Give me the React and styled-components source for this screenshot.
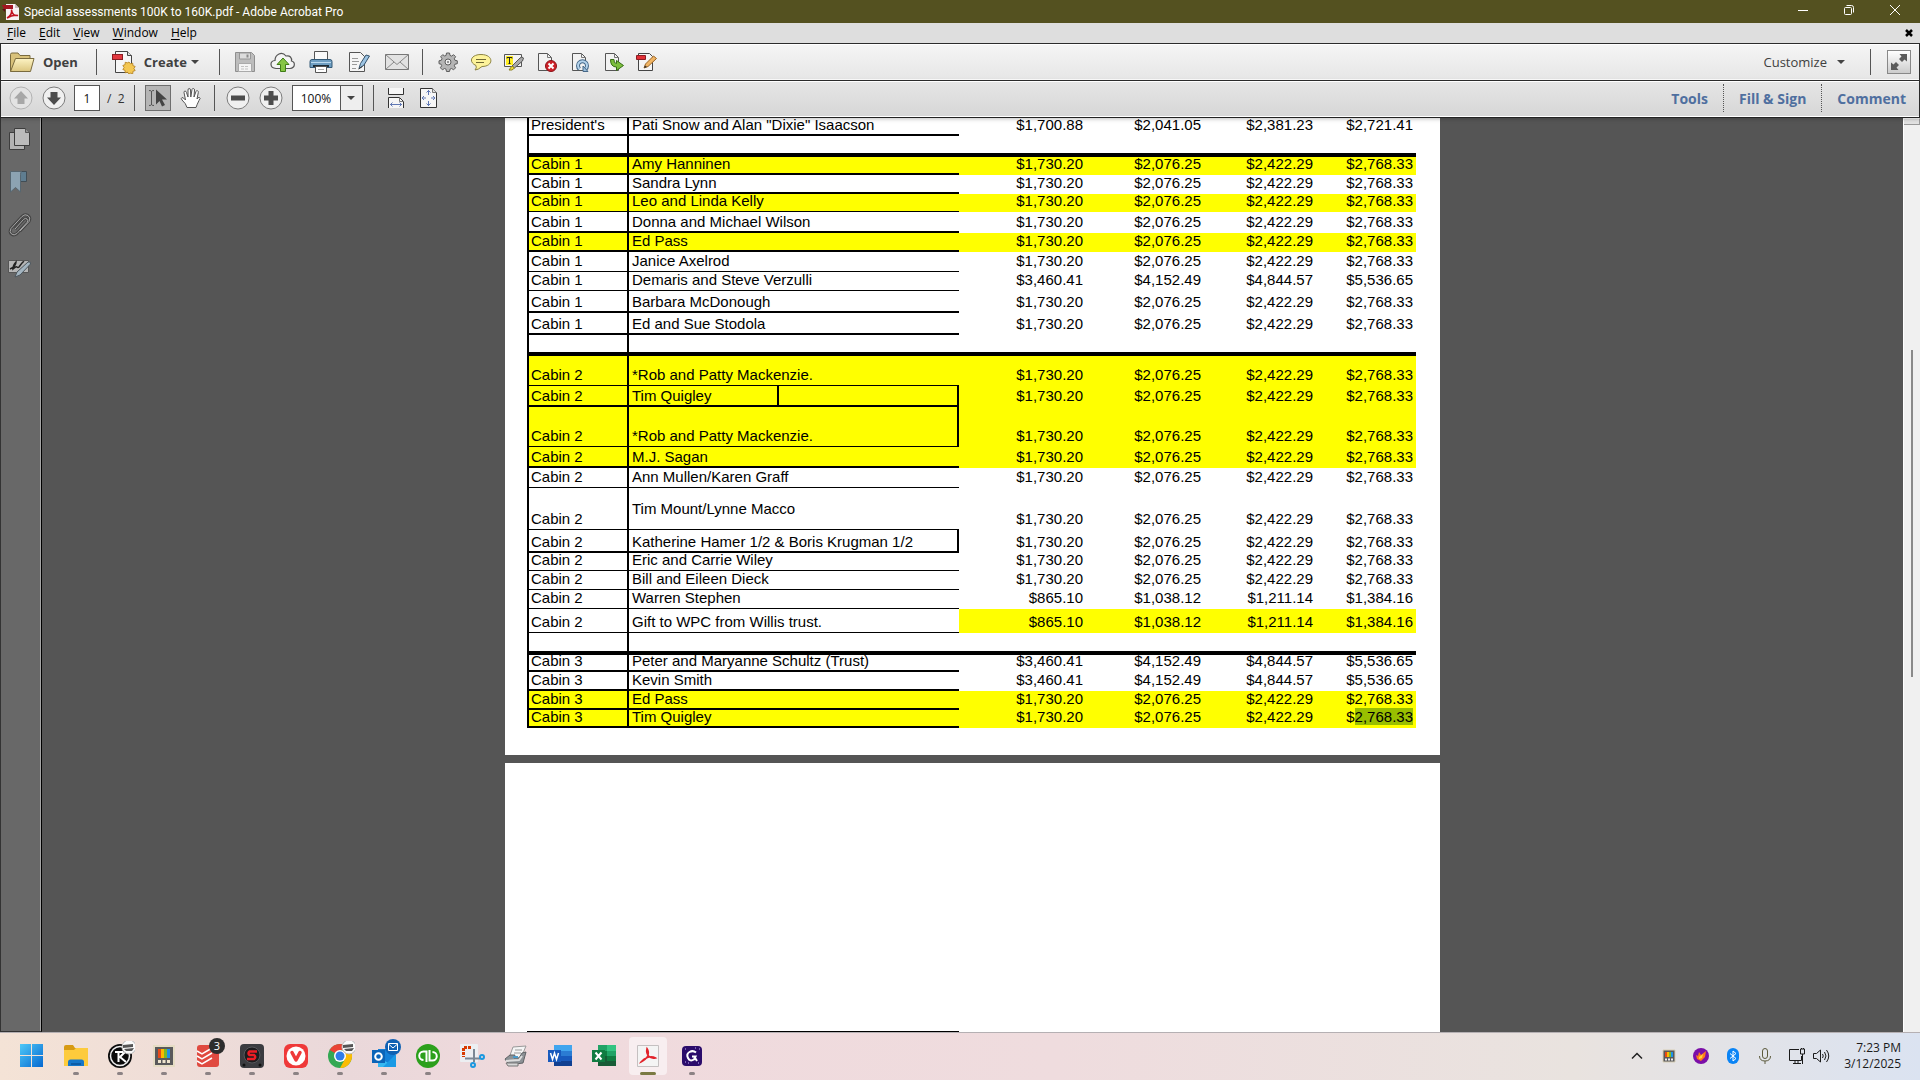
import { useState } from 'react';
import styled, { createGlobalStyle, css } from 'styled-components';

const A = ['$1,730.20', '$2,076.25', '$2,422.29', '$2,768.33'];
const B = ['$3,460.41', '$4,152.49', '$4,844.57', '$5,536.65'];
const C = ['$865.10', '$1,038.12', '$1,211.14', '$1,384.16'];
const D = ['$1,700.88', '$2,041.05', '$2,381.23', '$2,721.41'];

// h: row height, line: thickness of the rule under the row
const rows = [
  { cabin: "President's", name: 'Pati Snow and Alan "Dixie" Isaacson', amounts: D, h: 18, line: 2 },
  { h: 21, line: 4 },
  { cabin: 'Cabin 1', name: 'Amy Hanninen', amounts: A, h: 18, line: 2, paid: true },
  { cabin: 'Cabin 1', name: 'Sandra Lynn', amounts: A, h: 19, line: 2 },
  { cabin: 'Cabin 1', name: 'Leo and Linda Kelly', amounts: A, h: 18, line: 1, paid: true },
  { cabin: 'Cabin 1', name: 'Donna and Michael Wilson', amounts: A, h: 21, line: 2 },
  { cabin: 'Cabin 1', name: 'Ed Pass', amounts: A, h: 19, line: 2, paid: true },
  { cabin: 'Cabin 1', name: 'Janice Axelrod', amounts: A, h: 20, line: 1 },
  { cabin: 'Cabin 1', name: 'Demaris and Steve Verzulli', amounts: B, h: 19, line: 1 },
  { cabin: 'Cabin 1', name: 'Barbara McDonough', amounts: A, h: 22, line: 2 },
  { cabin: 'Cabin 1', name: 'Ed and Sue Stodola', amounts: A, h: 22, line: 2 },
  { h: 21, line: 4 },
  { cabin: 'Cabin 2', name: '*Rob and Patty Mackenzie.', amounts: A, h: 30, line: 1, paid: true },
  { cabin: 'Cabin 2', name: 'Tim Quigley', amounts: A, h: 21, line: 2, paid: true, boxed: true, split: true },
  { cabin: 'Cabin 2', name: '*Rob and Patty Mackenzie.', amounts: A, h: 40, line: 1, paid: true, boxed: true },
  { cabin: 'Cabin 2', name: 'M.J. Sagan', amounts: A, h: 21, line: 2, paid: true },
  { cabin: 'Cabin 2', name: 'Ann Mullen/Karen Graff', amounts: A, h: 20, line: 1 },
  { cabin: 'Cabin 2', name: 'Tim Mount/Lynne Macco', amounts: A, h: 42, line: 1, raised: true },
  { cabin: 'Cabin 2', name: 'Katherine Hamer 1/2 & Boris Krugman 1/2', amounts: A, h: 23, line: 2, boxed: true },
  { cabin: 'Cabin 2', name: 'Eric and Carrie Wiley', amounts: A, h: 18, line: 1 },
  { cabin: 'Cabin 2', name: 'Bill and Eileen Dieck', amounts: A, h: 19, line: 1 },
  { cabin: 'Cabin 2', name: 'Warren Stephen', amounts: C, h: 19, line: 1 },
  { cabin: 'Cabin 2', name: 'Gift to WPC from Willis trust.', amounts: C, h: 24, line: 1, paidAmounts: true },
  { h: 22, line: 4 },
  { cabin: 'Cabin 3', name: 'Peter and Maryanne Schultz (Trust)', amounts: B, h: 17, line: 2 },
  { cabin: 'Cabin 3', name: 'Kevin Smith', amounts: B, h: 19, line: 2 },
  { cabin: 'Cabin 3', name: 'Ed Pass', amounts: A, h: 19, line: 2, paid: true },
  { cabin: 'Cabin 3', name: 'Tim Quigley', amounts: A, h: 18, line: 2, paid: true, selected: true },
];

const columns = [100, 150, 182, 127, 118, 112, 100];

const icons = {
  acrobat: (
    <svg width="18" height="18" viewBox="0 0 18 18">
      <path d="M4 1h9l4 4v12H4z" fill="#f7f3f3" />
      <path d="M13 1l4 4h-4z" fill="#c9bcbc" />
      <path d="M0 2h11v4H2z" fill="#a31621" />
      <path d="M0 6l3 3V6z" fill="#5d0b12" />
      <path d="M5 15c4-2 5-5 4.500-8.500 .5 5 3 6.500 6.500 6-4-1-7 0-11 2.500z" fill="none" stroke="#c1121f" strokeWidth="1.500" />
    </svg>
  ),
  folder: (
    <svg width="26" height="22" viewBox="0 0 26 22">
      <path d="M1.500 20.500V3.500q0-1.500 1.500-1.500h6l2 2.500h10v4" fill="#d9c27b" stroke="#7a6b3e" />
      <path d="M1.500 20.500L6.500 7.500h18.500l-3.500 13z" fill="url(#fold)" stroke="#7a6b3e" strokeLinejoin="round" />
      <defs><linearGradient id="fold" x1="0" y1="0" x2="0" y2="1"><stop offset="0" stopColor="#fdf3c4" /><stop offset="1" stopColor="#dcc67f" /></linearGradient></defs>
    </svg>
  ),
  create: (
    <svg width="24" height="24" viewBox="0 0 24 24">
      <path d="M3.500 1.500h12l4 4v17h-16z" fill="#f6f6f6" stroke="#444" />
      <path d="M15.500 1.500v4h4" fill="#ddd" stroke="#444" />
      <rect x=".5" y="4.500" width="10" height="5" fill="#e2383f" stroke="#8b1c22" />
      <path d="M17 12l1.500 1.800 2.300-.6.100 2.400 2.300.9-1.300 2 1.300 2-2.300.9-.1 2.300-2.300-.5L17 24l-1.500-1.800-2.300.6-.1-2.400-2.300-.9 1.300-2-1.300-2 2.300-.9.100-2.300 2.300.5z" fill="#f4c752" stroke="#b07c1c" strokeWidth=".8" />
    </svg>
  ),
  save: (
    <svg width="22" height="22" viewBox="0 0 22 22">
      <path d="M1.500 1.500h16l3 3v16h-19z" fill="#bdbdbd" stroke="#8f8f8f" />
      <path d="M5.500 2h11v6h-11z" fill="#ddd" stroke="#979797" /><path d="M12.500 3.500h2v3h-2z" fill="#8b8b8b" />
      <path d="M4.500 12.500h13v8h-13z" fill="#f4f4f4" stroke="#aaa" />
      <path d="M7 15.500h8M7 18h8" stroke="#c2c2c2" strokeDasharray="3 1" />
    </svg>
  ),
  cloud: (
    <svg width="26" height="22" viewBox="0 0 26 22">
      <path d="M6 17.500C-.5 17-.5 10 5 9.500 5 3 12 0 16 5c4-1 6 2 5.500 5 4 1 4 7-1.500 7.500z" fill="#f4f4f4" stroke="#555" strokeWidth="1.200" />
      <path d="M13 7l6 6.500h-3.500v7h-5v-7H7z" fill="#86c544" stroke="#3f7d16" />
    </svg>
  ),
  print: (
    <svg width="24" height="24" viewBox="0 0 24 24">
      <path d="M5.500 1.500h13v10h-13z" fill="#fafafa" stroke="#555" />
      <path d="M3 9.500h18q2 0 2 2v6h-22v-6q0-2 2-2z" fill="#6e9ec2" stroke="#345a77" />
      <path d="M2 12.500h20" stroke="#bcd9ee" /><path d="M4 15h16v2H4z" fill="#1c2c38" />
      <path d="M6.500 16.500h11v6h-11z" fill="#fff" stroke="#555" /><path d="M9 19.500h6" stroke="#aaa" />
    </svg>
  ),
  sign: (
    <svg width="22" height="22" viewBox="0 0 22 22">
      <path d="M1.500 1.500h11l4 4v15h-15z" fill="#f5f5f5" stroke="#555" />
      <path d="M4 7.500h6M4 10.500h7M4 13.500h5M4 17.500h4" stroke="#999" />
      <path d="M11 17.500l1.500-5L18 4l3.500 1L16 14z" fill="#9cc3e2" stroke="#36536c" /><path d="M10.500 18l4-2.500" stroke="#333" />
    </svg>
  ),
  mail: (
    <svg width="26" height="18" viewBox="0 0 26 18">
      <path d="M1.500 1.500h23v15h-23z" fill="#e2e2e2" stroke="#777" />
      <path d="M1.500 1.500L13 11.500l11.500-10M1.500 16.500L10 9M24.500 16.500L16 9" fill="none" stroke="#888" />
    </svg>
  ),
  gear: (
    <svg width="20" height="20" viewBox="0 0 20 20">
      <path d="M8.500 1h3l.5 2.400 1.600.7 2-1.400 2 2-1.300 2.100.7 1.500 2.300.5v2.900l-2.400.5-.6 1.600 1.300 2-2 2-2-1.300-1.600.7-.5 2.300h-3l-.5-2.400-1.500-.6-2.100 1.300-2-2 1.300-2.100-.6-1.500L1 11.700V8.800l2.300-.5.700-1.600-1.300-2 2-2 2 1.300 1.400-.6z" fill="#b5b5b5" stroke="#5d5d5d" />
      <circle cx="10" cy="10" r="3" fill="#eee" stroke="#5d5d5d" /><circle cx="10" cy="10" r="1" fill="#777" />
    </svg>
  ),
  comment: (
    <svg width="22" height="18" viewBox="0 0 22 18">
      <path d="M11 1.500c13 0 13 12 1 12q-4 3.500-7 3.500 2-2 1-4.500C-2 9 1 1.500 11 1.500z" fill="#fdf39a" stroke="#8d8443" />
      <path d="M6 6.500h10M6 9.500h8" stroke="#6f6835" />
    </svg>
  ),
  highlight: (
    <svg width="22" height="20" viewBox="0 0 22 20">
      <path d="M1.500 2.500h17v12h-17z" fill="#f4f4f4" stroke="#555" /><path d="M3 4h7v9H3z" fill="#ffee22" />
      <path d="M4 6.500v-1h5v1M6.500 6v5M5.500 11.500h2" fill="none" stroke="#222" />
      <path d="M9 14l8-8q2-2 3.500 0l-1 3-8 7z" fill="#aaa" stroke="#555" /><path d="M6 18l3-4 2.500 2-2.500 2z" fill="#efdc2c" stroke="#8b8024" />
    </svg>
  ),
  remove: (
    <svg width="22" height="22" viewBox="0 0 22 22">
      <path d="M2.500 2.500h9l4 4v13h-13z" fill="#f2f2f2" stroke="#555" /><path d="M11.500 2.500v4h4" fill="none" stroke="#777" />
      <circle cx="15" cy="15" r="5.500" fill="#cf2028" stroke="#8a1217" /><path d="M12.500 12.500l5 5m0-5l-5 5" stroke="#fff" strokeWidth="2" />
    </svg>
  ),
  rotate: (
    <svg width="22" height="22" viewBox="0 0 22 22">
      <path d="M3.500 2.500h9l4 4v13h-13z" fill="#f2f2f2" stroke="#555" /><path d="M12.500 2.500v4h4" fill="none" stroke="#777" />
      <path d="M10.500 18a4.500 4.500 0 1 1 6 0" fill="none" stroke="#466888" strokeWidth="4" />
      <path d="M10.500 18a4.500 4.500 0 1 1 6 0" fill="none" stroke="#b4d3ec" strokeWidth="2" /><path d="M14 15v5.500h5z" fill="#9dc1de" stroke="#466888" />
    </svg>
  ),
  extract: (
    <svg width="22" height="22" viewBox="0 0 22 22">
      <path d="M3.500 2.500h9l4 4v13h-13z" fill="#f2f2f2" stroke="#555" /><path d="M12.500 2.500v4h4" fill="none" stroke="#777" />
      <path d="M8.500 8.500q0 7.500 6 7.500v3.500l7-5-7-5v3q-3 0-2.500-4z" fill="#7cbf3e" stroke="#356d14" />
    </svg>
  ),
  edit: (
    <svg width="22" height="22" viewBox="0 0 22 22">
      <path d="M3.500 2.500h11l3 3v14h-14z" fill="#f5f5f5" stroke="#444" /><path d="M1.500 4.500h9v4h-9z" fill="#e22f36" stroke="#8b1c22" />
      <path d="M9 17l1.500-4 8-8 3 2.500-8.500 8z" fill="#f1b565" stroke="#9a6424" /><path d="M9 17l1-2.500 2 1.500z" fill="#333" />
    </svg>
  ),
  up: (
    <svg width="24" height="24" viewBox="0 0 24 24">
      <circle cx="12" cy="12" r="11" fill="#e3e3e3" stroke="#b2b2b2" /><path d="M12 5l7 7.500h-3.500V18h-7v-5.500H5z" fill="#a7a7a7" />
    </svg>
  ),
  down: (
    <svg width="24" height="24" viewBox="0 0 24 24">
      <circle cx="12" cy="12" r="11" fill="#f0f0f0" stroke="#7c7c7c" /><path d="M12 19l7-7.500h-3.500V6h-7v5.500H5z" fill="#4d4d4d" />
    </svg>
  ),
  minus: (
    <svg width="24" height="24" viewBox="0 0 24 24">
      <circle cx="12" cy="12" r="11" fill="#f0f0f0" stroke="#7c7c7c" /><path d="M5 9.500h14v5H5z" fill="#4d4d4d" />
    </svg>
  ),
  plus: (
    <svg width="24" height="24" viewBox="0 0 24 24">
      <circle cx="12" cy="12" r="11" fill="#f0f0f0" stroke="#7c7c7c" /><path d="M9.500 5h5v4.500H19v5h-4.500V19h-5v-4.500H5v-5h4.500z" fill="#4d4d4d" />
    </svg>
  ),
  select: (
    <svg width="22" height="20" viewBox="0 0 22 20">
      <path d="M2 2.500q2.500 0 2.500 1 0-1 2.500-1M4.500 3v14M2 17.500q2.500 0 2.500-1 0 1 2.500 1" fill="none" stroke="#555" />
      <path d="M9 1.500v15l3.500-3.500 2.500 5.500 3-1.500-3-5.500h5z" fill="#444" />
    </svg>
  ),
  hand: (
    <svg width="22" height="22" viewBox="0 0 22 22">
      <path d="M7 20.500q-1-4-5-7.500-1.500-2 0-2.500 1.500 0 3.500 2.500L4 5.500q0-1.500 1-1.500t1.500 1.500L8 10V3q0-1.500 1.200-1.500T10.500 3l.3 7L12 2.500q.5-1.300 1.500-1t1 1.500L14 10l2-5.500q.5-1.300 1.500-.8t.8 1.800L17 12q1-2 2.500-1.500t-.5 3q-2 4-3 7z" fill="#fdfdfd" stroke="#555" strokeLinejoin="round" />
    </svg>
  ),
  fitWidth: (
    <svg width="20" height="22" viewBox="0 0 20 22">
      <path d="M2.500 1v6.500h15V1" fill="#f6f6f6" stroke="#333" /><path d="M2.500 21V10.500h11l4 4V21" fill="#f6f6f6" stroke="#333" />
      <path d="M13.500 10.500v4h4" fill="none" stroke="#777" /><path d="M4 17.500h12M6.500 15.500l-2 2 2 2M13.500 15.500l2 2-2 2" fill="none" stroke="#6078b4" />
    </svg>
  ),
  fitPage: (
    <svg width="20" height="22" viewBox="0 0 20 22">
      <path d="M1.500 1.500h12l4 4v15h-16z" fill="#f6f6f6" stroke="#333" /><path d="M13.500 1.500v4h4" fill="#ddd" stroke="#777" />
      <path d="M9.500 3v5M9.500 14v5M3 11h4M12 11h4M7.500 5.500l2-2 2 2M7.500 16.500l2 2 2-2M5 9l-2 2 2 2M14 9l2 2-2 2" fill="none" stroke="#6078b4" />
    </svg>
  ),
  expand: (
    <svg width="22" height="22" viewBox="0 0 22 22">
      <path d="M11.500 3H19v7.500l-2.500-2L14 11l-3-3 2.500-2.500zM3 11.500l2.500 2L8 11l3 3-2.500 2.500 2 2.500H3z" fill="#5b5b5b" />
    </svg>
  ),
  pages: (
    <svg width="24" height="24" viewBox="0 0 24 24">
      <path d="M1.500 5.500h15v17h-15z" fill="#b3b3b3" stroke="#3d3d3d" />
      <path d="M6.500 1.500h11l4 4v13h-15z" fill="#bbb" stroke="#3d3d3d" /><path d="M17.500 1.500v4h4" fill="#8e8e8e" stroke="#555" />
    </svg>
  ),
  bookmark: (
    <svg width="24" height="24" viewBox="0 0 24 24">
      <path d="M12 1.500h6.500v10H12z" fill="#5f7d90" stroke="#414d55" /><path d="M2.500 1.500h11q-1 1-1 3V22l-5-4.500-5 4.500z" fill="#8ca3b2" stroke="#566670" />
    </svg>
  ),
  clip: (
    <svg width="24" height="24" viewBox="0 0 24 24">
      <path d="M7 16l8.500-9.500q2-2 3.500-.5t0 3.500l-10 11q-3 2.500-5.500.5t-.5-5.500L14 3.500q3-3 6-1t1 6L12 18" fill="none" stroke="#444" strokeWidth="3" />
      <path d="M7 16l8.500-9.500q2-2 3.500-.5t0 3.500l-10 11q-3 2.500-5.500.5t-.5-5.500L14 3.500q3-3 6-1t1 6L12 18" fill="none" stroke="#a8a8a8" strokeWidth="1" />
    </svg>
  ),
  signatures: (
    <svg width="24" height="24" viewBox="0 0 24 24">
      <path d="M.5 4.500h20v12H.5z" fill="#b5b5b5" stroke="#555" />
      <path d="M2 13q6-3 6-7-3 3-3 7 3-3 4-2t2 0q4-6 5-5" fill="none" stroke="#222" strokeWidth="1.500" />
      <path d="M7 21l2-5 11-10q3-1 2.500 2L12 19z" fill="#a3b4c0" stroke="#4c565d" />
    </svg>
  ),
};

const taskIcons = {
  Start: (
    <svg width="24" height="24" viewBox="0 0 24 24">
      <defs><linearGradient id="win" x1="0" y1="0" x2="1" y2="1"><stop offset="0" stopColor="#4fc9f8" /><stop offset="1" stopColor="#0568d0" /></linearGradient></defs>
      <path d="M0 0h11v11H0zM12 0h11v11H12zM0 12h11v11H0zM12 12h11v11H12z" fill="url(#win)" />
    </svg>
  ),
  'File Explorer': (
    <svg width="24" height="24" viewBox="0 0 24 24">
      <path d="M0 3q0-2 2-2h7l2 3h11v8H0z" fill="#d79a13" /><path d="M0 6h10l2-2h12v18H0z" fill="#fdcb3c" />
      <path d="M4 22v-4q0-2.500 2.500-2.500h11q2.500 0 2.500 2.500v4z" fill="#1577c9" /><path d="M7 19h10v2H7z" fill="#0c5ca6" />
    </svg>
  ),
  Keyman: (
    <svg width="30" height="30" viewBox="0 0 30 30">
      <circle cx="15" cy="15" r="12" fill="#0c0c0c" /><circle cx="15" cy="15" r="9.500" fill="none" stroke="#eee" strokeWidth="1.500" />
      <path d="M10 11h8M13.500 11v10M20 11l-5 5 6 5" fill="none" stroke="#fff" strokeWidth="2" />
      <circle cx="24" cy="6" r="7" fill="#fafafa" stroke="#bbb" /><path d="M18 4l10-1v3l-10 1zM19 8l10-1-2 3h-6z" fill="#555" />
    </svg>
  ),
  PowerToys: (
    <svg width="24" height="24" viewBox="0 0 24 24">
      <path d="M2 2h20v20H2z" fill="#59595b" stroke="#e5dcc4" strokeWidth="2" />
      <path d="M6 5h3v9H6z" fill="#e64a19" /><path d="M9 5h3v9H9z" fill="#fbb900" /><path d="M12 5h3v9h-3z" fill="#7cb928" /><path d="M15 5h3v9h-3z" fill="#1e90e8" />
      <path d="M6 16h3v3H6zM10.500 16h3v3h-3zM15 16h3v3h-3z" fill="#eee4cd" />
    </svg>
  ),
  Todoist: (
    <svg width="24" height="24" viewBox="0 0 24 24">
      <rect x="1" y="1" width="22" height="22" rx="3" fill="#e04a40" />
      <path d="M1 7l5 3 10-6M1 12l5 3 10-6M1 17l5 3 10-6" fill="none" stroke="#fff" strokeWidth="1.500" />
    </svg>
  ),
  Scrivener: (
    <svg width="26" height="26" viewBox="0 0 26 26">
      <rect x="1" y="1" width="24" height="24" rx="4" fill="#3b3c40" /><circle cx="13" cy="12" r="8" fill="#1c1c1e" stroke="#57585c" />
      <path d="M18 8.500h-7.500q-2 1.500 0 3.500h4.500q2.500 2 0 4H8" fill="none" stroke="#ee1c24" strokeWidth="2.500" />
      <circle cx="5" cy="22" r="1.500" fill="#111" /><circle cx="21" cy="22" r="1.500" fill="#111" />
    </svg>
  ),
  Vivaldi: (
    <svg width="24" height="24" viewBox="0 0 24 24">
      <rect width="24" height="24" rx="6" fill="#ef3939" /><circle cx="12" cy="12" r="9.500" fill="#fff" />
      <path d="M8 8.500l4 7.500 4-7.500" fill="none" stroke="#ef3939" strokeWidth="3.500" strokeLinecap="round" strokeLinejoin="round" />
    </svg>
  ),
  Chrome: (
    <svg width="30" height="30" viewBox="0 0 30 30">
      <circle cx="15" cy="15" r="12" fill="#34a853" /><path d="M15 15L4.600 9A12 12 0 0 1 25.400 9H15z" fill="#ea4335" />
      <path d="M25.400 9A12 12 0 0 1 15 27l5-9-2-9z" fill="#fbbc04" /><circle cx="15" cy="15" r="6" fill="#fff" /><circle cx="15" cy="15" r="4.500" fill="#2f7de9" />
      <circle cx="24" cy="6" r="7" fill="#fafafa" stroke="#bbb" /><path d="M18 4l10-1v3l-10 1zM19 8l10-1-2 3h-6z" fill="#555" />
    </svg>
  ),
  Outlook: (
    <svg width="34" height="34" viewBox="0 0 34 34">
      <path d="M11 10h17v18H11z" fill="#1380d8" /><path d="M11 18l17 10H11z" fill="#35b8f1" /><path d="M29 15v13H16z" fill="#1a9ae5" />
      <rect x="5" y="11" width="13" height="13" fill="#0a64b8" /><circle cx="11.500" cy="17.500" r="3.300" fill="none" stroke="#fff" strokeWidth="2" />
      <circle cx="26" cy="8" r="8" fill="#0f61b3" /><path d="M21.500 4.500h9v7h-9zM21.500 5l4.500 4 4.500-4" fill="none" stroke="#fff" />
    </svg>
  ),
  QuickBooks: (
    <svg width="26" height="26" viewBox="0 0 26 26">
      <circle cx="13" cy="13" r="12" fill="#2ca01c" />
      <path d="M11.500 19V8.500H8.500a4 4 0 0 0 0 8.500M14.500 7v10.500h3a4 4 0 0 0 0-8.500" fill="none" stroke="#fff" strokeWidth="2" />
    </svg>
  ),
  'Snipping Tool': (
    <svg width="26" height="26" viewBox="0 0 26 26">
      <rect x="1" y="1" width="18" height="18" rx="1" fill="#eceff2" /><path d="M12 4.500H4.500V14" fill="none" stroke="#d83b01" strokeWidth="3" strokeDasharray="3 1" />
      <path d="M15 6v13M6 15.500h15" stroke="#7b8794" strokeWidth="2" /><circle cx="14" cy="22" r="2" fill="none" stroke="#1a98e0" strokeWidth="2" /><circle cx="23" cy="14" r="2" fill="none" stroke="#1a98e0" strokeWidth="2" />
    </svg>
  ),
  Scanner: (
    <svg width="26" height="24" viewBox="0 0 26 24">
      <path d="M10 3l13-1-5 12H6z" fill="#f5f5f5" stroke="#999" /><path d="M12 6h7M11 9h7" stroke="#999" />
      <path d="M2 15l5-4h5l-1 3h5l3-5 4-1-3 11-14 2z" fill="#8d9296" stroke="#5e6265" /><path d="M3 17l13-1 3-4" fill="none" stroke="#ddd" strokeWidth="2" /><path d="M3 19h12v3H5z" fill="#d8d8d8" stroke="#777" />
      <path d="M10 13h5" stroke="#4b9ac9" strokeWidth="2" />
    </svg>
  ),
  Word: (
    <svg width="24" height="24" viewBox="0 0 24 24">
      <path d="M6 1h18v6H6z" fill="#41a5ee" /><path d="M6 7h18v5H6z" fill="#2b7cd3" /><path d="M6 12h18v5H6z" fill="#185abd" /><path d="M6 17h18v5H6z" fill="#103f91" />
      <path d="M0 6h13v12H0z" fill="#185abd" /><path d="M2.500 9l2 6.500 2-6.500 2 6.500 2-6.500" fill="none" stroke="#fff" strokeWidth="1.500" />
    </svg>
  ),
  Excel: (
    <svg width="24" height="24" viewBox="0 0 24 24">
      <path d="M6 1h9v6H6z" fill="#21a366" /><path d="M15 1h9v6h-9z" fill="#33c481" /><path d="M6 7h9v5H6z" fill="#107c41" /><path d="M15 7h9v5h-9z" fill="#21a366" /><path d="M6 12h18v10H6z" fill="#185c37" /><path d="M15 12h9v5h-9z" fill="#107c41" />
      <path d="M0 6h13v12H0z" fill="#107c41" /><path d="M3.500 8.500l6 7m0-7l-6 7" stroke="#fff" strokeWidth="2" />
    </svg>
  ),
  Acrobat: (
    <svg width="24" height="24" viewBox="0 0 24 24">
      <path d="M1.500 1.500h21v21h-21z" fill="#f4f4f4" stroke="#c5c0c1" />
      <path d="M5 18c7-3 9-9 6-13.500-1.500 6 3 11 8.500 9.500-4-2.500-11-1-14.500 4z" fill="none" stroke="#e2232b" strokeWidth="1.500" />
    </svg>
  ),
  Grammar: (
    <svg width="22" height="22" viewBox="0 0 22 22">
      <rect x="1" y="1" width="20" height="20" rx="4" fill="#2b0c6b" />
      <path d="M15 7.500q-3-2.500-6.500-.5T7 13t6 1.500l1.500-3H11M13.500 12l2.500 4" fill="none" stroke="#fff" strokeWidth="2" /><path d="M4 4h1M18 4h1M17 18h1M4 17h1M7 18h1M14 3h1" stroke="#c9b3ff" />
    </svg>
  ),
};

const tray = [
  ['Show hidden icons', <svg width="16" height="16" viewBox="0 0 16 16"><path d="M3 10.500l5-5 5 5" fill="none" stroke="#222" strokeWidth="1.500" /></svg>],
  ['Toys', <svg width="14" height="14" viewBox="0 0 14 14"><path d="M1 1h12v12H1z" fill="#59595b" stroke="#d8cfb6" /><path d="M3 3h2v5H3z" fill="#e64a19" /><path d="M5 3h2v5H5z" fill="#fbb900" /><path d="M7 3h2v5H7z" fill="#7cb928" /><path d="M9 3h2v5H9z" fill="#1e90e8" /><path d="M3 9.500h2v2H3zM6 9.500h2v2H6zM9 9.500h2v2H9z" fill="#eee" /></svg>],
  ['Phoenix', <svg width="16" height="16" viewBox="0 0 16 16"><circle cx="8" cy="8" r="8" fill="#7b0fa8" /><path d="M3 7l2 1 1-4 2 3 5-4-1 6-4 4-4-2z" fill="#ff7a1a" /><path d="M6 9l4-3-1 4-3 1z" fill="#ffd23c" /></svg>],
  ['Bluetooth', <svg width="12" height="16" viewBox="0 0 12 16"><rect width="12" height="16" rx="6" fill="#0a84f5" /><path d="M3 5.500l6 5L6 13V3l3 2.500-6 5" fill="none" stroke="#fff" /></svg>],
  ['Microphone', <svg width="14" height="18" viewBox="0 0 14 18"><rect x="4.500" y="1.500" width="5" height="10" rx="2.500" fill="none" stroke="#5c5a3c" /><path d="M1.500 9q0 5 5.500 5t5.500-5M7 14v3" fill="none" stroke="#5c5a3c" /></svg>],
  ['Network', <svg width="18" height="18" viewBox="0 0 18 18"><path d="M11 2.500H1.500v11h12V9M5 16.500h8M7 13.500v3M10 13.500v3M14.500 7v10" fill="none" stroke="#1a1a1a" /><path d="M12.500 2v5h4V2zM13.500 2V1M15.500 2V1" fill="none" stroke="#1a1a1a" /></svg>],
  ['Volume', <svg width="18" height="16" viewBox="0 0 18 16"><path d="M1.500 5.500h3l4-3.500v12l-4-3.500h-3zM10.500 6q1.500 2 0 4M12.500 4q3 4 0 8M14.500 2q4.500 6 0 12" fill="none" stroke="#1a1a1a" /></svg>],
];

const fileTools = [
  ['Save', 'save'], ['Upload to cloud', 'cloud'], ['Print', 'print'], ['Sign', 'sign'], ['Email', 'mail'],
];
const quickTools = [
  ['Preferences', 'gear'], ['Add comment', 'comment'], ['Highlight text', 'highlight'], ['Delete pages', 'remove'],
  ['Rotate pages', 'rotate'], ['Extract pages', 'extract'], ['Edit', 'edit'],
];
const menus = ['File', 'Edit', 'View', 'Window', 'Help'];
const panels = [['Page Thumbnails', 'pages'], ['Bookmarks', 'bookmark'], ['Attachments', 'clip'], ['Signatures', 'signatures']];

function Assessments() {
  return (
    <Sheet>
      <colgroup>
        {columns.map((width, i) => <Column key={i} $width={width} />)}
      </colgroup>
      <tbody>
        {rows.map((row, i) => (
          <Row key={i} $height={row.h}>
            <Cell $line={row.line} $paid={row.paid} $ruled>{row.cabin}</Cell>
            <NameCell
              $line={row.line}
              $paid={row.paid}
              $raised={row.raised}
              $boxed={row.boxed && !row.split}
              $ruled
              colSpan={row.split ? 1 : 2}
            >
              {row.name}
            </NameCell>
            {row.split && <Cell $line={row.line} $paid={row.paid} $boxed $ruled />}
            {(row.amounts || ['', '', '', '']).map((amount, n) => (
              <Amount key={n} $line={row.line === 4 ? 4 : 0} $paid={row.paid || row.paidAmounts}>
                {row.selected && n === 3 ? <>$<Selection>{amount.slice(1)}</Selection></> : amount}
              </Amount>
            ))}
          </Row>
        ))}
      </tbody>
    </Sheet>
  );
}

export default function App() {
  const [page, setPage] = useState('1');
  const [zoom, setZoom] = useState('100%');

  return (
    <Screen>
      <GlobalStyle />
      <TitleBar>
        {icons.acrobat}
        <Title>Special assessments 100K to 160K.pdf - Adobe Acrobat Pro</Title>
        <WindowButton aria-label="Minimize">
          <svg width="12" height="12" viewBox="0 0 12 12"><path d="M1 6.500h10" stroke="#fff" /></svg>
        </WindowButton>
        <WindowButton aria-label="Restore">
          <svg width="12" height="12" viewBox="0 0 12 12" fill="none" stroke="#fff"><rect x="1.500" y="3.500" width="7" height="7" rx="1" /><path d="M3.500 1.500h5q2 0 2 2v5" /></svg>
        </WindowButton>
        <WindowButton aria-label="Close">
          <svg width="12" height="12" viewBox="0 0 12 12"><path d="M1 1l10 10M11 1L1 11" stroke="#fff" /></svg>
        </WindowButton>
      </TitleBar>

      <MenuBar>
        {menus.map((menu) => (
          <MenuButton key={menu}><u>{menu[0]}</u>{menu.slice(1)}</MenuButton>
        ))}
        <Spacer />
        <CloseDocument aria-label="Close document">
          <svg width="8" height="8" viewBox="0 0 8 8"><path d="M1 1l6 6M7 1L1 7" stroke="#000" strokeWidth="2.500" /></svg>
        </CloseDocument>
      </MenuBar>

      <Toolbar>
        <TextButton>{icons.folder}Open</TextButton>
        <Separator $before={18} $after={11} />
        <TextButton>{icons.create}Create<Caret $gap={4} /></TextButton>
        <Separator $before={20} $after={6} />
        {fileTools.map(([label, icon]) => (
          <ToolButton key={icon} $width={38} aria-label={label}>{icons[icon]}</ToolButton>
        ))}
        <Separator $before={6} $after={9} />
        {quickTools.map(([label, icon]) => (
          <ToolButton key={icon} $width={33} aria-label={label}>{icons[icon]}</ToolButton>
        ))}
        <Spacer />
        <Customize>Customize<Caret $gap={10} /></Customize>
        <Separator $before={25} $after={16} />
        <ExpandButton aria-label="Read mode">{icons.expand}</ExpandButton>
      </Toolbar>

      <Toolbar $dim>
        <ToolButton $width={33} aria-label="Previous page" disabled>{icons.up}</ToolButton>
        <ToolButton $width={33} aria-label="Next page">{icons.down}</ToolButton>
        <PageInput aria-label="Page number" value={page} onChange={(e) => setPage(e.target.value)} />
        <PageCount>/&nbsp; 2</PageCount>
        <Separator $before={9} $after={10} />
        <ToolButton $width={26} $pressed aria-label="Select tool">{icons.select}</ToolButton>
        <ToolButton $width={40} aria-label="Hand tool">{icons.hand}</ToolButton>
        <Separator $before={3} $after={7} />
        <ToolButton $width={33} aria-label="Zoom out">{icons.minus}</ToolButton>
        <ToolButton $width={33} aria-label="Zoom in">{icons.plus}</ToolButton>
        <ZoomBox>
          <ZoomInput aria-label="Zoom level" value={zoom} onChange={(e) => setZoom(e.target.value)} />
          <ZoomMenu aria-label="Zoom presets"><Caret $gap={0} /></ZoomMenu>
        </ZoomBox>
        <Separator $before={10} $after={6} />
        <ToolButton $width={33} aria-label="Fit width">{icons.fitWidth}</ToolButton>
        <ToolButton $width={33} aria-label="Fit page">{icons.fitPage}</ToolButton>
        <Spacer />
        <PaneTab>Tools</PaneTab>
        <PaneTab>Fill &amp; Sign</PaneTab>
        <PaneTab>Comment</PaneTab>
      </Toolbar>

      <Workspace>
        <SidePanel>
          {panels.map(([label, icon]) => (
            <PanelButton key={icon} aria-label={label}>{icons[icon]}</PanelButton>
          ))}
        </SidePanel>
        <Viewer>
          <Paper><Assessments /></Paper>
          <Paper $next><NextSheet /></Paper>
        </Viewer>
        <ScrollTrack>
          <SplitHandle />
          <ScrollGap $share={225} />
          <Thumb />
          <ScrollGap $share={355} />
        </ScrollTrack>
      </Workspace>

      <Taskbar>
        {Object.keys(taskIcons).map((name) => {
          const idle = ['Start', 'Snipping Tool', 'Scanner', 'Word', 'Excel'].includes(name);
          return (
            <TaskButton key={name} $active={name === 'Acrobat'} $running={!idle} aria-label={name}>
              {taskIcons[name]}
              {name === 'Todoist' && <Badge>3</Badge>}
            </TaskButton>
          );
        })}
        <Spacer />
        {tray.map(([label, icon]) => (
          <TrayButton key={label} $narrow={label === 'Volume'} aria-label={label}>{icon}</TrayButton>
        ))}
        <Clock>
          <span>7:23 PM</span>
          <span>3/12/2025</span>
        </Clock>
      </Taskbar>
    </Screen>
  );
}

const GlobalStyle = createGlobalStyle`
  * {
    box-sizing: border-box;
  }

  body {
    margin: 0;
    overflow: hidden;
    font-family: 'Open Sans', 'Noto Sans', sans-serif;
    font-size: 12px;
  }

  button, input {
    font: inherit;
    color: inherit;
    margin: 0;
    padding: 0;
    border: 0;
    background: none;
  }

  svg {
    display: block;
    flex-shrink: 0;
  }
`;

const Screen = styled.div`
  display: flex;
  flex-direction: column;
  height: 100vh;
  background: #555;
`;

const Spacer = styled.div`
  flex: 1;
`;

const TitleBar = styled.header`
  display: flex;
  align-items: center;
  flex-shrink: 0;
  height: 23px;
  padding: 0 2px;
  background: #545120;
  color: #fff;
`;

const Title = styled.div`
  flex: 1;
  margin-left: 4px;
  font-family: Roboto, 'Open Sans', sans-serif;
  white-space: nowrap;
`;

const WindowButton = styled.button`
  display: flex;
  align-items: center;
  justify-content: center;
  width: 46px;
  height: 20px;
  align-self: flex-start;
`;

const MenuBar = styled.nav`
  display: flex;
  align-items: center;
  flex-shrink: 0;
  height: 20px;
  padding: 0 7px;
  gap: 13px;
  background: #dedede;
  color: #000;
`;

const MenuButton = styled.button`
  line-height: 18px;

  u {
    text-underline-offset: 2px;
  }
`;

const CloseDocument = styled.button`
  display: flex;
  align-items: center;
`;

const Toolbar = styled.div`
  display: flex;
  align-items: center;
  flex-shrink: 0;
  height: 37px;
  padding: 0 8px 0 4px;
  border: 1px solid #2b2b2b;
  border-bottom: 0;
  background: linear-gradient(#f5f5f5, #e6e6e6);
  box-shadow: inset 0 1px #fff, inset 0 -1px #fff;
  color: #404040;

  ${({ $dim }) =>
    $dim &&
    css`
      position: relative;
      z-index: 1;
      padding: 0 8px 2px 3px;
      background: linear-gradient(#e6e6e6, #d6d6d6);
      box-shadow: inset 0 1px #fff, inset 0 -1px #fff, 0 2px 4px rgba(0, 0, 0, 0.25);
    `}
`;

const TextButton = styled.button`
  display: flex;
  align-items: center;
  padding-left: 4px;
  font-size: 13px;
  font-weight: 700;

  svg {
    margin-right: 8px;
  }
`;

const Separator = styled.div`
  width: 1px;
  height: 26px;
  margin-left: ${({ $before }) => $before}px;
  margin-right: ${({ $after }) => $after}px;
  background: #555;
`;

const Caret = styled.span`
  margin-left: ${({ $gap }) => $gap}px;
  border: 4px solid transparent;
  border-top-color: #444;
  border-bottom: 0;
`;

const ToolButton = styled.button`
  display: flex;
  align-items: center;
  justify-content: center;
  width: ${({ $width }) => $width}px;
  height: 26px;

  ${({ $pressed }) =>
    $pressed &&
    css`
      border: 1px solid #6e6e6e;
      background: #b5b5b5;
    `}
`;

const Customize = styled.button`
  display: flex;
  align-items: center;
  font-size: 13px;
`;

const ExpandButton = styled.button`
  width: 24px;
  height: 24px;
  border: 1px solid #888;
  background: linear-gradient(#fff, #ccc);
`;

const PageInput = styled.input`
  width: 26px;
  height: 26px;
  margin-left: 4px;
  border: 1px solid #555;
  background: #fff;
  color: #111;
  text-align: center;
`;

const PageCount = styled.span`
  padding-left: 7px;
  color: #333;
`;

const ZoomBox = styled.div`
  display: flex;
  width: 71px;
  height: 26px;
  margin-left: 4px;
  border: 1px solid #555;
  background: #fff;
`;

const ZoomInput = styled.input`
  flex: 1;
  min-width: 0;
  color: #111;
  text-align: center;
`;

const ZoomMenu = styled.button`
  display: flex;
  align-items: center;
  justify-content: center;
  width: 22px;
  border-left: 1px solid #555;
  background: #eee;
`;

const PaneTab = styled.button`
  height: 28px;
  padding: 0 15px;
  color: #4f6f9f;
  font-size: 14px;
  font-weight: 700;

  & + & {
    border-left: 1px dotted #555;
  }

  &:last-child {
    padding-right: 5px;
  }
`;

const Workspace = styled.main`
  display: flex;
  flex: 1;
  min-height: 0;
  border-top: 1px solid #2b2b2b;
`;

const SidePanel = styled.aside`
  display: flex;
  flex-direction: column;
  align-items: center;
  gap: 19px;
  width: 42px;
  flex-shrink: 0;
  padding: 9px 2px 0 0;
  border: 1px solid #333;
  border-top: 0;
  border-right-color: #000;
  background: #686868;
  box-shadow: inset -1px 0 #a5a5a5;
`;

const PanelButton = styled.button`
  width: 24px;
  height: 24px;
`;

const Viewer = styled.section`
  display: flex;
  flex-direction: column;
  align-items: center;
  flex: 1;
  gap: 8px;
  min-width: 0;
  overflow: hidden;
  background: #555;
`;

const Paper = styled.article`
  flex-shrink: 0;
  width: 935px;
  padding: ${({ $next }) => ($next ? '268px 22px 0' : '0 22px 27px')};
  background: #fff;
`;

const NextSheet = styled.div`
  width: 432px;
  height: 40px;
  border-top: 2px solid #000;
`;

const Sheet = styled.table`
  width: 889px;
  table-layout: fixed;
  border-spacing: 0;
  color: #000;
  font-family: 'Liberation Sans', Arial, sans-serif;
  font-size: 15px;
  line-height: 11px;
`;

const Column = styled.col`
  width: ${({ $width }) => $width}px;
`;

const Row = styled.tr`
  height: ${({ $height }) => $height}px;
`;

const Cell = styled.td`
  padding: 0 3px ${({ $line, $raised }) => ($raised ? 16 : 6) - $line}px 2px;
  border: 0 solid #000;
  border-bottom-width: ${({ $line }) => $line}px;
  border-left-width: ${({ $ruled }) => ($ruled ? 2 : 0)}px;
  border-right-width: ${({ $boxed }) => ($boxed ? 2 : 0)}px;
  background: ${({ $paid }) => ($paid ? '#ff0' : 'transparent')};
  vertical-align: bottom;
  white-space: nowrap;
`;

const NameCell = styled(Cell)`
  padding-left: 3px;
`;

const Amount = styled(Cell)`
  text-align: right;
`;

const Selection = styled.mark`
  background: #99bf00;
  color: inherit;
`;

const ScrollTrack = styled.div`
  display: flex;
  flex-direction: column;
  align-items: center;
  width: 17px;
  flex-shrink: 0;
  border-left: 1px solid #fff;
  background: #f0f0f0;
`;

const SplitHandle = styled.div`
  width: 100%;
  height: 7px;
  border: 1px solid #999;
  border-top-color: #fff;
  border-left: 0;
  background: #e2e2e2;
`;

const ScrollGap = styled.div`
  flex: ${({ $share }) => $share};
`;

const Thumb = styled.div`
  flex: 327;
  width: 2px;
  background: #8a8a8a;
`;

const Taskbar = styled.footer`
  display: flex;
  align-items: center;
  flex-shrink: 0;
  height: 48px;
  padding: 0 19px 2px 10px;
  border-top: 1px solid #b5b0b3;
  background: linear-gradient(90deg, #f4e3d6, #ead8da 18%, #f0dadd 30%, #efdcde 55%, #e9e3df 82%, #dbe3f1);
`;

const TaskButton = styled.button`
  position: relative;
  display: flex;
  align-items: center;
  justify-content: center;
  width: 38px;
  height: 38px;
  margin: 0 3px;
  border-radius: 4px;
  background: ${({ $active }) => ($active ? '#f8eef0' : 'transparent')};

  &::after {
    content: '';
    display: ${({ $running }) => ($running ? 'block' : 'none')};
    position: absolute;
    bottom: 0;
    width: ${({ $active }) => ($active ? 16 : 6)}px;
    height: 3px;
    border-radius: 2px;
    background: ${({ $active }) => ($active ? '#7b7a43' : '#8b8284')};
  }
`;

const Badge = styled.span`
  position: absolute;
  top: 1px;
  right: 2px;
  width: 16px;
  height: 16px;
  border-radius: 50%;
  background: #2d2d2d;
  color: #fff;
  font-size: 11px;
  line-height: 16px;
`;

const TrayButton = styled.button`
  display: flex;
  align-items: center;
  justify-content: center;
  width: ${({ $narrow }) => ($narrow ? 16 : 32)}px;
`;

const Clock = styled.time`
  display: flex;
  flex-direction: column;
  width: 72px;
  color: #1a1a1a;
  line-height: 16px;
  text-align: right;
`;
